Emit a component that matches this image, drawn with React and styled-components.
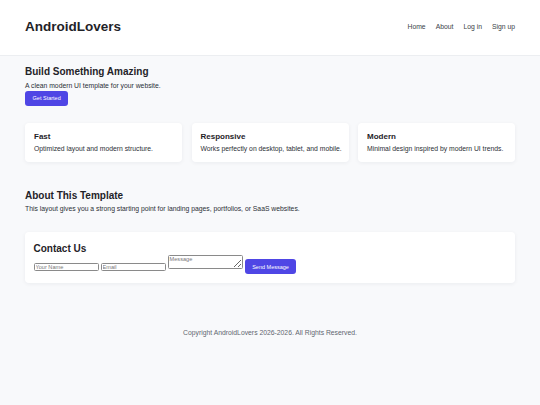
import React from "react";
import styled, { createGlobalStyle } from "styled-components";

const Global = createGlobalStyle`
  html, body { margin: 0; padding: 0; background: #f8f9fb; }
  body { font-family: "Liberation Sans", Arial, sans-serif; color: #222; }
  * { box-sizing: border-box; }
`;

const Header = styled.header`
  height: 56px;
  background: #fff;
  border-bottom: 1px solid #eceef1;
  display: flex;
  align-items: center;
  justify-content: space-between;
  padding: 0 25px 1px 25px;
`;

const Logo = styled.div`
  font-size: 13.5px;
  font-weight: 700;
  color: #1f2328;
  line-height: 16px;
`;

const Nav = styled.nav`
  display: flex;
  gap: 10px;
`;

const NavLink = styled.a`
  font-size: 6.8px;
  color: #3a3f47;
  text-decoration: none;
  line-height: 8px;
`;

const Main = styled.main`
  padding: 10px 25px 0 25px;
`;

const H2 = styled.h2`
  margin: 0;
  font-size: 10px;
  line-height: 12px;
  font-weight: 700;
  color: #1f2328;
`;

const Text = styled.p`
  margin: 3.5px 0 0 0;
  font-size: 6.8px;
  line-height: 8px;
  color: #2b2f36;
`;

const Button = styled.button`
  border: none;
  background: #4f46e5;
  color: #fff;
  font-family: "Liberation Sans", Arial, sans-serif;
  font-size: 5.5px;
  line-height: 6px;
  padding: ${(p) => (p.$big ? "4.5px 7.6px" : "4.25px 7.6px")};
  border-radius: 3px;
  display: inline-block;
  vertical-align: baseline;
`;

const HeroButton = styled(Button)`
  display: block;
  margin-top: 1.5px;
`;

const Cards = styled.div`
  display: grid;
  grid-template-columns: repeat(3, 1fr);
  gap: 9.5px;
  margin-top: 17.3px;
`;

const Card = styled.div`
  background: #fff;
  border-radius: 4px;
  box-shadow: 0 1px 4px rgba(20, 30, 50, 0.06);
  padding: ${(p) => p.$pad || "9.3px 4px 9.4px 9px"};
`;

const H3 = styled.h3`
  margin: 0;
  font-size: 8px;
  line-height: 10px;
  font-weight: 700;
  color: #1f2328;
`;

const CardText = styled.p`
  margin: 3px 0 0 0;
  font-size: 6.8px;
  line-height: 8px;
  color: #2b2f36;
  white-space: nowrap;
`;

const About = styled.section`
  margin-top: 28px;
`;

const AboutText = styled(Text)`
  margin-top: 2.6px;
`;

const Contact = styled(Card)`
  margin-top: 18.7px;
`;

const Form = styled.form`
  margin-top: 0.5px;
  font-size: 5.5px;
  line-height: 6px;
`;

const Input = styled.input`
  width: 65.5px;
  height: 8px;
  padding: 0 1px;
  border: 1px solid #8a8a8a;
  border-radius: 1.5px;
  font-family: "Liberation Sans", Arial, sans-serif;
  font-size: 5.6px;
  vertical-align: baseline;
  margin: 0;
  &::placeholder { color: #777; }
`;

const Textarea = styled.textarea`
  width: 75.5px;
  height: 13.5px;
  padding: 0 1px;
  border: 1px solid #8a8a8a;
  border-radius: 1.5px;
  font-family: "Liberation Sans", Arial, sans-serif;
  font-size: 5.6px;
  line-height: 6px;
  vertical-align: baseline;
  margin: 0;
  display: inline-block;
  &::placeholder { color: #777; }
`;

const Footer = styled.footer`
  margin-top: 46.5px;
  text-align: center;
  font-size: 6.8px;
  line-height: 8px;
  color: #5f6670;
`;

const features = [
  { t: "Fast", d: "Optimized layout and modern structure." },
  { t: "Responsive", d: "Works perfectly on desktop, tablet, and mobile." },
  { t: "Modern", d: "Minimal design inspired by modern UI trends." },
];

export default function App() {
  return (
    <>
      <Global />
      <Header>
        <Logo>AndroidLovers</Logo>
        <Nav>
          <NavLink href="#">Home</NavLink>
          <NavLink href="#">About</NavLink>
          <NavLink href="#">Log in</NavLink>
          <NavLink href="#">Sign up</NavLink>
        </Nav>
      </Header>
      <Main>
        <section>
          <H2>Build Something Amazing</H2>
          <Text>A clean modern UI template for your website.</Text>
          <HeroButton>Get Started</HeroButton>
        </section>
        <Cards>
          {features.map((f) => (
            <Card key={f.t}>
              <H3>{f.t}</H3>
              <CardText>{f.d}</CardText>
            </Card>
          ))}
        </Cards>
        <About>
          <H2>About This Template</H2>
          <AboutText>
            This layout gives you a strong starting point for landing pages, portfolios, or SaaS websites.
          </AboutText>
        </About>
        <Contact $pad="11px 8.5px 8.3px 8.5px">
          <H2>Contact Us</H2>
          <Form onSubmit={(e) => e.preventDefault()}>
            <Input placeholder="Your Name" /> <Input placeholder="Email" />{" "}
            <Textarea placeholder="Message" /> <Button $big type="submit">Send Message</Button>
          </Form>
        </Contact>
        <Footer>Copyright AndroidLovers 2026-2026. All Rights Reserved.</Footer>
      </Main>
    </>
  );
}
